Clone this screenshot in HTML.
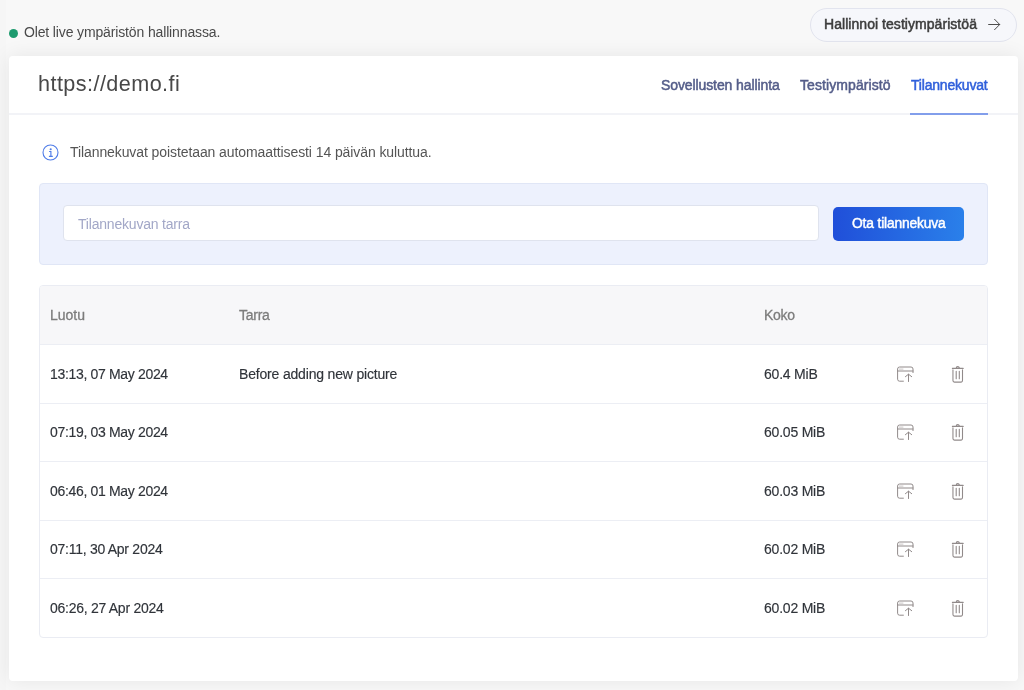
<!DOCTYPE html>
<html lang="fi">
<head>
<meta charset="utf-8">
<title>Tilannekuvat</title>
<style>
*{box-sizing:border-box;margin:0;padding:0}
html,body{width:1024px;height:690px;overflow:hidden}
body{background:#f8f8f8;font-family:"Liberation Sans",sans-serif;color:#444;position:relative}
.t{position:absolute;white-space:nowrap;line-height:1;display:block;will-change:transform}
.med{-webkit-text-stroke:0.35px currentColor}
.strip{position:absolute;left:0;top:0;width:6px;height:690px;background:#f6f6f6}
/* top bar */
.dot{position:absolute;left:9px;top:28.5px;width:9px;height:9px;border-radius:50%;background:#1e9b6f}
.live{left:24.4px;top:25.3px;font-size:14px;letter-spacing:-.14px;color:#4a4a4a}
.pill{position:absolute;left:810px;top:8px;width:207px;height:34px;border-radius:17px;border:1px solid #e2e4ee;background:#f6f7fb}
.pill .t{left:13.3px;top:8.4px;font-size:14px;letter-spacing:.05px;color:#3c3c3c;-webkit-text-stroke:.5px currentColor}
.pill svg{position:absolute;left:175.8px;top:9px}
/* card */
.card{position:absolute;left:9px;top:56px;width:1008.5px;height:625px;background:#fff;border-radius:4px;box-shadow:0 0 20px rgba(0,0,0,.08)}
.title{left:29.4px;top:17.4px;font-size:21.6px;letter-spacing:.44px;color:#484848}
.hr{position:absolute;left:0;right:0;top:57px;height:2px;background:#f2f3f7}
.tab{top:22.3px;font-size:14px;color:#545d89;-webkit-text-stroke:.5px currentColor}
.tab.on{color:#2f5fdb}
.ul{position:absolute;left:901px;top:57px;width:78px;height:2px;background:#829eeb}
/* info */
.info svg{position:absolute;left:33.3px;top:88px}
.infotxt{left:61.3px;top:89.3px;font-size:14px;letter-spacing:-.09px;color:#555}
/* form */
.form{position:absolute;left:30px;top:127px;width:949px;height:82px;background:#edf1fd;border:1px solid #e0e6f6;border-radius:4px}
.inp{position:absolute;left:23px;top:21px;width:756px;height:36px;background:#fff;border:1px solid #dfe3ee;border-radius:4px}
.inp .t{left:13.6px;top:11.3px;font-size:14px;letter-spacing:-.2px;color:#a2a7c7}
.btn{position:absolute;left:793px;top:23px;width:131px;height:34px;border-radius:5px;background:linear-gradient(90deg,#204fd9 0%,#2a80ea 100%)}
.btn .t{left:18.8px;top:9.6px;font-size:13.8px;letter-spacing:-.15px;color:#fff;-webkit-text-stroke:.45px #fff}
/* table */
.tbl{position:absolute;left:30px;top:229px;width:949px;height:353px;border:1px solid #eaecf3;border-radius:4px;overflow:hidden}
.th{position:absolute;left:0;right:0;top:0;height:59px;background:#f7f7f9;border-bottom:1px solid #eceef4}
.th .t{top:21.6px;font-size:14px;color:#7c7c7c;-webkit-text-stroke:.3px currentColor}
.tr{position:absolute;left:0;right:0;height:58.4px}
.ln{position:absolute;left:0;right:0;height:1px;background:#eceef4}
.tr .t{top:22px;font-size:14px;color:#30343a;-webkit-text-stroke:.15px currentColor}
.tr .c1{letter-spacing:-.33px}.tr .c1.apr{letter-spacing:-.27px}.tr .c2{letter-spacing:-.18px}.tr .c3{letter-spacing:-.21px}
.tr svg{position:absolute;top:20px}
.tr .iw{left:856px}.tr .it{left:910px}
.c1{left:10px}.c2{left:198.7px}.c3{left:723.8px}
</style>
</head>
<body>
<div class="strip"></div>
<div class="dot"></div>
<span class="t live">Olet live ympäristön hallinnassa.</span>
<div class="pill"><span class="t med">Hallinnoi testiympäristöä</span>
<svg width="14" height="13" viewBox="0 0 14 13" fill="none" stroke="#4d4d4d" stroke-width="1" stroke-linecap="round" stroke-linejoin="round"><path d="M1.6 6.5h11M7.6 1.3l5.1 5.2-5.1 5.2"/></svg>
</div>

<div class="card">
  <span class="t title">https://demo.fi</span>
  <span class="t tab med" style="left:652.2px;letter-spacing:-.1px">Sovellusten hallinta</span>
  <span class="t tab med" style="left:791px;letter-spacing:.09px">Testiympäristö</span>
  <span class="t tab on med" style="left:901.5px;letter-spacing:-.2px">Tilannekuvat</span>
  <div class="hr"></div>
  <div class="ul"></div>

  <div class="info">
    <svg width="17" height="17" viewBox="0 0 17 17" fill="none"><circle cx="8.5" cy="8.5" r="7.5" stroke="#4f7ce8" stroke-width="1.1"/><circle cx="8.7" cy="5.2" r="1.05" fill="#4f7ce8"/><path d="M7.1 7.5h1.8v4.9M6.9 12.4h3.9" stroke="#4f7ce8" stroke-width="1.15"/></svg>
  </div>
  <span class="t infotxt">Tilannekuvat poistetaan automaattisesti 14 päivän kuluttua.</span>

  <div class="form">
    <div class="inp"><span class="t">Tilannekuvan tarra</span></div>
    <div class="btn"><span class="t med">Ota tilannekuva</span></div>
  </div>

  <div class="tbl">
    <div class="th"><span class="t c1">Luotu</span><span class="t c2" style="letter-spacing:-.25px">Tarra</span><span class="t c3" style="letter-spacing:-.3px">Koko</span></div>
    <div class="tr" style="top:59px"><span class="t c1">13:13, 07 May 2024</span><span class="t c2">Before adding new picture</span><span class="t c3">60.4 MiB</span><svg class="iw" width="19" height="18" viewBox="0 0 19 18" fill="none" stroke="#918a8a" stroke-width="1" stroke-linecap="round" stroke-linejoin="round"><path d="M7.4 16.2H3.6a2 2 0 0 1-2-2V4a2 2 0 0 1 2-2H15a2 2 0 0 1 2 2v3.6M1.6 6H17M12.5 16.5V9.3M9.4 11.7l3.1-2.5 3.2 2.5"/><path d="M3.4 4.1H7" stroke-width=".8" opacity=".6"/></svg><svg class="it" width="16" height="19" viewBox="0 0 16 19" fill="none" stroke="#918a8a" stroke-width="1.1" stroke-linecap="round" stroke-linejoin="round"><path d="M2.4 3.4h10.8M6.2 3.2a1.6 1.6 0 0 1 3.2 0M2.95 4.9v10.7a1.5 1.5 0 0 0 1.5 1.5H11a1.5 1.5 0 0 0 1.5-1.5V4.9M6.2 6.2v7.6M9.3 6.2v7.6"/></svg></div>
    <div class="tr" style="top:117.4px"><span class="t c1">07:19, 03 May 2024</span><span class="t c3">60.05 MiB</span><svg class="iw" width="19" height="18" viewBox="0 0 19 18" fill="none" stroke="#918a8a" stroke-width="1" stroke-linecap="round" stroke-linejoin="round"><path d="M7.4 16.2H3.6a2 2 0 0 1-2-2V4a2 2 0 0 1 2-2H15a2 2 0 0 1 2 2v3.6M1.6 6H17M12.5 16.5V9.3M9.4 11.7l3.1-2.5 3.2 2.5"/><path d="M3.4 4.1H7" stroke-width=".8" opacity=".6"/></svg><svg class="it" width="16" height="19" viewBox="0 0 16 19" fill="none" stroke="#918a8a" stroke-width="1.1" stroke-linecap="round" stroke-linejoin="round"><path d="M2.4 3.4h10.8M6.2 3.2a1.6 1.6 0 0 1 3.2 0M2.95 4.9v10.7a1.5 1.5 0 0 0 1.5 1.5H11a1.5 1.5 0 0 0 1.5-1.5V4.9M6.2 6.2v7.6M9.3 6.2v7.6"/></svg></div>
    <div class="tr" style="top:175.8px"><span class="t c1">06:46, 01 May 2024</span><span class="t c3">60.03 MiB</span><svg class="iw" width="19" height="18" viewBox="0 0 19 18" fill="none" stroke="#918a8a" stroke-width="1" stroke-linecap="round" stroke-linejoin="round"><path d="M7.4 16.2H3.6a2 2 0 0 1-2-2V4a2 2 0 0 1 2-2H15a2 2 0 0 1 2 2v3.6M1.6 6H17M12.5 16.5V9.3M9.4 11.7l3.1-2.5 3.2 2.5"/><path d="M3.4 4.1H7" stroke-width=".8" opacity=".6"/></svg><svg class="it" width="16" height="19" viewBox="0 0 16 19" fill="none" stroke="#918a8a" stroke-width="1.1" stroke-linecap="round" stroke-linejoin="round"><path d="M2.4 3.4h10.8M6.2 3.2a1.6 1.6 0 0 1 3.2 0M2.95 4.9v10.7a1.5 1.5 0 0 0 1.5 1.5H11a1.5 1.5 0 0 0 1.5-1.5V4.9M6.2 6.2v7.6M9.3 6.2v7.6"/></svg></div>
    <div class="tr" style="top:234.2px"><span class="t c1 apr">07:11, 30 Apr 2024</span><span class="t c3">60.02 MiB</span><svg class="iw" width="19" height="18" viewBox="0 0 19 18" fill="none" stroke="#918a8a" stroke-width="1" stroke-linecap="round" stroke-linejoin="round"><path d="M7.4 16.2H3.6a2 2 0 0 1-2-2V4a2 2 0 0 1 2-2H15a2 2 0 0 1 2 2v3.6M1.6 6H17M12.5 16.5V9.3M9.4 11.7l3.1-2.5 3.2 2.5"/><path d="M3.4 4.1H7" stroke-width=".8" opacity=".6"/></svg><svg class="it" width="16" height="19" viewBox="0 0 16 19" fill="none" stroke="#918a8a" stroke-width="1.1" stroke-linecap="round" stroke-linejoin="round"><path d="M2.4 3.4h10.8M6.2 3.2a1.6 1.6 0 0 1 3.2 0M2.95 4.9v10.7a1.5 1.5 0 0 0 1.5 1.5H11a1.5 1.5 0 0 0 1.5-1.5V4.9M6.2 6.2v7.6M9.3 6.2v7.6"/></svg></div>
    <div class="tr" style="top:292.6px"><span class="t c1 apr">06:26, 27 Apr 2024</span><span class="t c3">60.02 MiB</span><svg class="iw" width="19" height="18" viewBox="0 0 19 18" fill="none" stroke="#918a8a" stroke-width="1" stroke-linecap="round" stroke-linejoin="round"><path d="M7.4 16.2H3.6a2 2 0 0 1-2-2V4a2 2 0 0 1 2-2H15a2 2 0 0 1 2 2v3.6M1.6 6H17M12.5 16.5V9.3M9.4 11.7l3.1-2.5 3.2 2.5"/><path d="M3.4 4.1H7" stroke-width=".8" opacity=".6"/></svg><svg class="it" width="16" height="19" viewBox="0 0 16 19" fill="none" stroke="#918a8a" stroke-width="1.1" stroke-linecap="round" stroke-linejoin="round"><path d="M2.4 3.4h10.8M6.2 3.2a1.6 1.6 0 0 1 3.2 0M2.95 4.9v10.7a1.5 1.5 0 0 0 1.5 1.5H11a1.5 1.5 0 0 0 1.5-1.5V4.9M6.2 6.2v7.6M9.3 6.2v7.6"/></svg></div>
    <div class="ln" style="top:117px"></div><div class="ln" style="top:175px"></div><div class="ln" style="top:234px"></div><div class="ln" style="top:292px"></div>
  </div>
</div>
</body>
</html>
